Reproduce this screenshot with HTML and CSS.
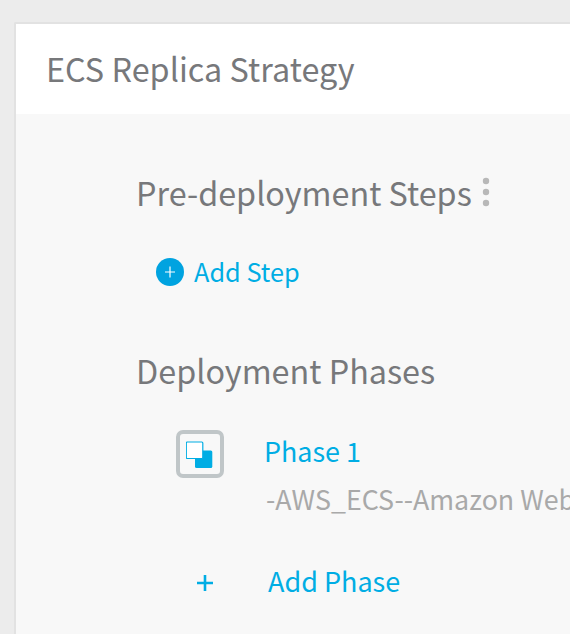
FILE: index.html
```html
<!DOCTYPE html>
<html lang="en">
<head>
<meta charset="utf-8">
<title>ECS Replica Strategy</title>
<link rel="stylesheet" href="styles.css">
</head>
<body>
<main class="panel">
  <header class="panel-header"><h1 class="title"><span>ECS Replica Strategy</span></h1></header>
  <section class="content">
    <div class="heading-row">
      <h2 class="heading"><span>Pre-deployment Steps</span></h2>
      <svg class="dots" width="8" height="30" viewBox="0 0 8 30"><circle cx="4" cy="4" r="3.2"/><circle cx="4" cy="15" r="3.2"/><circle cx="4" cy="26" r="3.2"/></svg>
    </div>
    <a class="add-step">
      <svg width="28" height="28" viewBox="0 0 28 28"><circle cx="14" cy="14" r="14" fill="#00a3e0"/><path d="M9 14h10M14 8.5v11" stroke="#fff" stroke-width="1.2"/></svg>
      <span>Add Step</span>
    </a>
    <h2 class="heading phases-heading"><span>Deployment Phases</span></h2>
    <div class="phase">
      <div class="phase-icon">
        <svg width="28" height="28" viewBox="0 0 28 28"><rect x="9" y="10.5" width="17.3" height="17.5" rx="1.5" fill="#00ade4"/><rect x=".3" y="2" width="16.5" height="16.5" rx="1" fill="#fff" stroke="#00ade4" stroke-width="1.2"/></svg>
      </div>
      <div class="phase-text">
        <a class="phase-name"><span>Phase 1</span></a>
        <p class="phase-detail"><span>-AWS_ECS--Amazon Web</span></p>
      </div>
    </div>
    <a class="add-phase">
      <svg class="plus" width="18" height="18" viewBox="0 0 18 18"><path d="M1 9h16M9 1v16" stroke="#00ade4" stroke-width="2.6"/></svg>
      <span>Add Phase</span>
    </a>
  </section>
</main>
</body>
</html>
```
FILE: styles.css
```css
* { box-sizing: border-box; }
body {
  margin: 0;
  height: 634px;
  padding: 22px 0 0 14px;
  overflow: hidden;
  background: #ececec;
  font-family: "Noto Sans CJK SC", sans-serif;
  white-space: nowrap;
}
h1, h2, p { margin: 0; font-weight: 400; }
.panel {
  height: 640px;
  border: 2px solid #e2e2e2;
  border-right: 0;
  border-top-left-radius: 2px;
  background: #f8f8f8;
  overflow: hidden;
}
.panel-header { height: 90px; padding: 21px 0 0 30px; background: #fff; }
.title, .heading { font-size: 32.35px; line-height: 46px; color: #77787b; }
.title { letter-spacing: 0.04px; }
.content { padding: 55px 0 0 120px; }
.heading-row { display: flex; align-items: flex-start; height: 46px; }
.dots { margin: 8px 0 0 10px; fill: #b8b8b8; }
.add-step {
  display: flex;
  align-items: center;
  gap: 10px;
  height: 40px;
  margin: 37px 0 0 20px;
  font-size: 25.3px;
  line-height: 40px;
  color: #00ade4;
}
.add-step span { margin-top: -2px; }
.phases-heading { margin-top: 55px; }
.phase { display: flex; margin: 37px 0 0 40px; }
.phase-icon {
  display: flex;
  flex: none;
  align-items: center;
  justify-content: center;
  width: 48px;
  height: 48px;
  border: 4px solid #c0c6c8;
  border-radius: 7px;
  background: #f8f8f8;
}
.phase-text { margin-left: 40px; font-size: 26.9px; line-height: 48px; }
.phase-name { display: block; margin-top: -3px; color: #00ade4; }
.phase-detail { padding-left: 2px; font-size: 26.8px; color: #a9a9a9; }
.add-phase {
  display: flex;
  align-items: center;
  gap: 54px;
  height: 40px;
  margin: 38px 0 0 60px;
  font-size: 27px;
  line-height: 40px;
  color: #00ade4;
}
.plus { margin-top: 4px; }
```
